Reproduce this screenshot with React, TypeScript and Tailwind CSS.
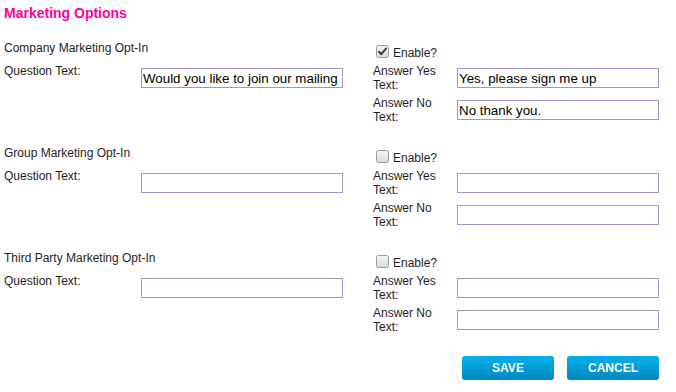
import React from "react";

const font = { fontFamily: '"Liberation Sans", Arial, sans-serif' };

function Check({ checked }: { checked: boolean }) {
  return (
    <svg width="13" height="13" viewBox="0 0 13 13" className="block">
      <defs>
        <linearGradient id={checked ? "gc" : "gu"} x1="0" y1="0" x2="0" y2="1">
          <stop offset="0" stopColor="#f6f6f6" />
          <stop offset="1" stopColor="#d9d9d9" />
        </linearGradient>
      </defs>
      <rect x="0.5" y="0.5" width="12" height="12" rx="2" fill={`url(#${checked ? "gc" : "gu"})`} stroke="#9a9a9a" />
      {checked && (
        <path d="M3 6.8 L5.3 9.2 L10 3.6" fill="none" stroke="#3c3c3c" strokeWidth="2" strokeLinecap="round" strokeLinejoin="round" />
      )}
    </svg>
  );
}

function Field({ value }: { value?: string }) {
  return (
    <input
      readOnly
      value={value ?? ""}
      className="h-[20px] w-[202px] border border-[#9d97d1] bg-white px-px text-[13.33px] text-black outline-none"
      style={font}
    />
  );
}

function Section({
  title,
  checked,
  q,
  yes,
  no,
}: {
  title: string;
  checked: boolean;
  q?: string;
  yes?: string;
  no?: string;
}) {
  return (
    <div className="flex">
      <div className="w-[369px]">
        <div className="h-[14px] leading-[14px]">{title}</div>
        <div className="mt-[9px] flex h-[28px]">
          <div className="w-[137px] leading-[14px]">Question Text:</div>
          <div className="flex items-center">
            <Field value={q} />
          </div>
        </div>
      </div>
      <div className="pt-[5px]">
        <div className="flex h-[14px] items-center">
          <div className="ml-[3px] mr-[4px] mt-[-3px]">
            <Check checked={checked} />
          </div>
          <span className="leading-[14px]">Enable?</span>
        </div>
        <div className="mt-[4px] flex h-[28px] items-center">
          <div className="w-[84px] self-start leading-[14px]">
            Answer Yes
            <br />
            Text:
          </div>
          <Field value={yes} />
        </div>
        <div className="mt-[4px] flex h-[28px] items-center">
          <div className="w-[84px] self-start leading-[14px]">
            Answer No
            <br />
            Text:
          </div>
          <Field value={no} />
        </div>
      </div>
    </div>
  );
}

function Btn({ label }: { label: string }) {
  return (
    <button
      className="h-[24px] w-[92px] rounded-[3px] bg-gradient-to-b from-[#00b2ec] to-[#0087c0] text-[12px] font-bold text-white"
      style={font}
    >
      {label}
    </button>
  );
}

export default function App() {
  return (
    <div className="h-[392px] w-[676px] bg-white pl-[4px] pt-[4px] text-[12px] text-[#1e1e1e]" style={font}>
      <div className="h-[18px] text-[14px] font-bold leading-[18px] text-[#ff0099]">Marketing Options</div>
      <div className="mt-[19px] flex flex-col gap-[22px]">
        <Section
          title="Company Marketing Opt-In"
          checked
          q="Would you like to join our mailing list?"
          yes="Yes, please sign me up"
          no="No thank you."
        />
        <Section title="Group Marketing Opt-In" checked={false} />
        <Section title="Third Party Marketing Opt-In" checked={false} />
        <div className="flex w-[655px] justify-end gap-[13px]">
          <Btn label="SAVE" />
          <Btn label="CANCEL" />
        </div>
      </div>
    </div>
  );
}
